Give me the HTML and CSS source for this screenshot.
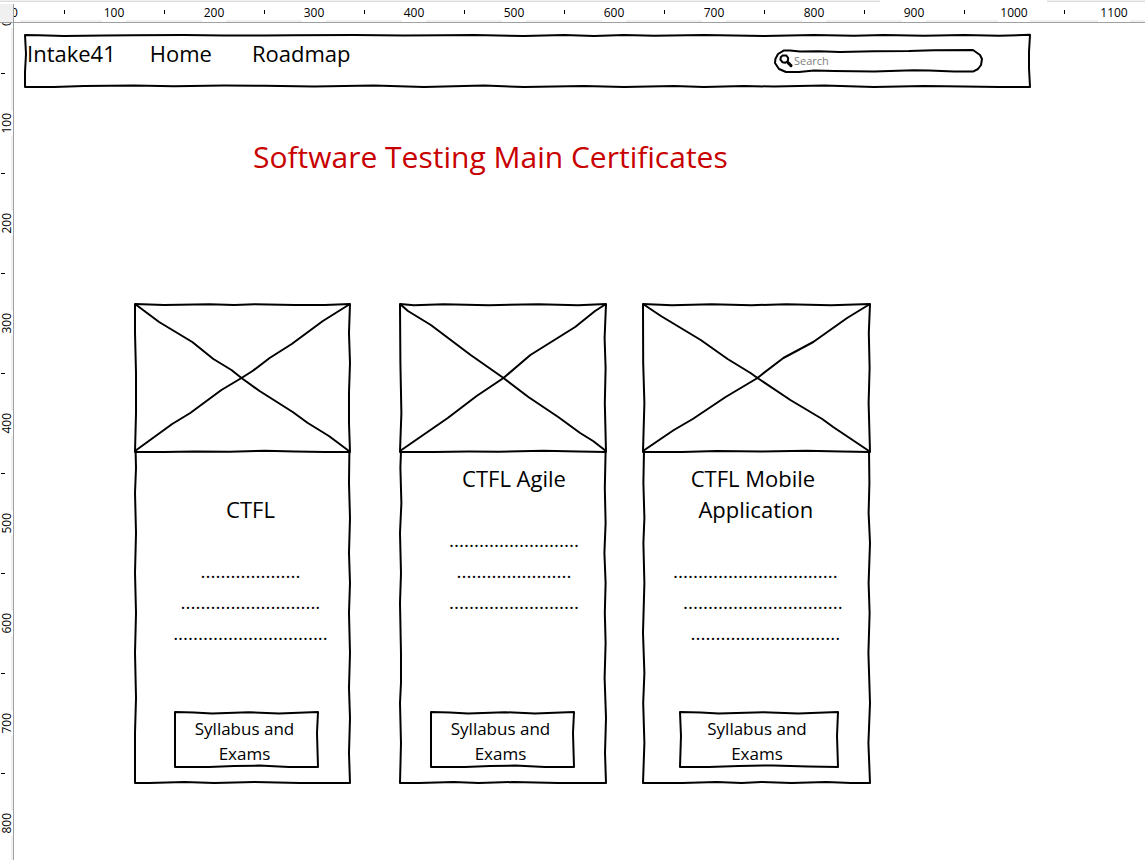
FILE: index.html
```html
<!DOCTYPE html>
<html lang="en">
<head>
<meta charset="utf-8">
<title>Software Testing Main Certificates</title>
<link rel="stylesheet" href="styles.css">
</head>
<body>
<div class="editor">
  <div class="edge"><span class="edge-left"></span><span class="edge-right"></span></div>
  <div class="corner"></div>
  <div class="ruler ruler-top">
    <div class="unit unit-first"><span>0</span></div>
    <div class="unit"><span>100</span></div>
    <div class="unit"><span>200</span></div>
    <div class="unit"><span>300</span></div>
    <div class="unit"><span>400</span></div>
    <div class="unit"><span>500</span></div>
    <div class="unit"><span>600</span></div>
    <div class="unit"><span>700</span></div>
    <div class="unit"><span>800</span></div>
    <div class="unit"><span>900</span></div>
    <div class="unit"><span>1000</span></div>
    <div class="unit"><span>1100</span></div>
  </div>
  <div class="ruler ruler-left">
    <div class="unit unit-first"><span>0</span></div>
    <div class="unit"><span>100</span></div>
    <div class="unit"><span>200</span></div>
    <div class="unit"><span>300</span></div>
    <div class="unit"><span>400</span></div>
    <div class="unit"><span>500</span></div>
    <div class="unit"><span>600</span></div>
    <div class="unit"><span>700</span></div>
    <div class="unit"><span>800</span></div>
  </div>

  <div class="canvas">
    <header class="topbar">
      <svg class="sketch" viewBox="0 0 1007 54" preserveAspectRatio="none" aria-hidden="true">
        <path d="M1 1 L15 1.2 40 2 80 1.5 110 1.2 160 1 200 1.6 240 1.4 270 1.2 330 1 380 1.6 420 1.2 450 1 500 2 540 1 570 2 600 1 630 1.8 680 1 740 2 790 1 830 1.8 860 1 900 1.8 940 1 975 1.8 1006 .8 L1005 18 1005 34 1006 53 L975 53 940 52.5 900 52 850 53 800 51.6 750 52.6 720 52 680 53 650 52 600 53 560 52 500 53 460 51.6 400 53 350 51.6 290 52.6 240 51.8 200 51.6 150 52.2 110 51.6 60 52 30 53 1 53 L1 38 2 20 Z"/>
      </svg>
      <nav class="menu">
        <a href="#intake">Intake41</a>
        <a href="#home">Home</a>
        <a href="#roadmap">Roadmap</a>
      </nav>
      <form class="search">
        <svg class="sketch" viewBox="0 0 209 24" preserveAspectRatio="none" aria-hidden="true">
          <path d="M10 1.4 L16 1.4 26 2.6 45 2.2 66 3 100 2.2 135 2 160 1.2 199 1 L206 6 208 10 207 16 204 20 199 22.6 L180 22.6 155 21.4 140 21.2 100 22.6 60 22 40 21.6 25 23 12 23 L5 20 1 14 1.4 10 4 5 Z"/>
        </svg>
        <svg class="glass" viewBox="0 0 14 14" aria-hidden="true">
          <path d="M3.4 1.6 L7.2 1.4 9.2 4 8.8 7 6.4 8.8 3.4 8.2 1.4 5.6 1.8 3.2 Z"/>
          <path class="handle" d="M9 8.6 L12 11.6"/>
        </svg>
        <input type="search" placeholder="Search" aria-label="Search">
      </form>
    </header>

    <main>
      <h1>Software Testing Main Certificates</h1>
      <div class="cards">
        <article class="card card-ctfl">
          <svg class="sketch" viewBox="0 0 216 481" preserveAspectRatio="none" aria-hidden="true">
            <path d="M1.6 148 L2 165 1 190 2 230 1 270 2 310 1 350 2 395 1 430 1 480 L15 480 50 479 80 480 120 479 165 480 215 480 L214 450 215 415 214 385 215 350 214 310 215 280 214 250 215 215 214 180 214.4 148"/>
          </svg>
          <div class="picture">
            <svg class="sketch" viewBox="0 0 216 150" preserveAspectRatio="none" role="img" aria-label="Picture">
              <path d="M1 1 L30 2 75 1.2 100 2 120 1.2 160 2 190 2 215 1 L214 30 215 60 214 90 214 120 215 149 L190 149 160 148.4 130 147.8 95 148.8 60 148.4 30 149 1 149 L2 110 2 70 1 30 Z"/>
              <path d="M1 1 L25 19 58 39 79 56 97 67 107 75 125 88 158 109 173 120 194 133 214 148 M215 1 L188 18 157 41 135 55 118 68 107 75 87 87 56 110 38 121 1 148"/>
            </svg>
          </div>
          <div class="content">
            <h2>CTFL</h2>
            <p>....................</p>
            <p>............................</p>
            <p>...............................</p>
          </div>
          <button type="button">
            <svg class="sketch" viewBox="0 0 145 57" preserveAspectRatio="none" aria-hidden="true">
              <path d="M1 1 L20 1.4 38 2.4 75 1.2 105 2.4 144 1 L143 22 144 56 L115 56 85 54.6 60 55 35 56 1 56 Z"/>
            </svg>
            Syllabus and Exams
          </button>
        </article>

        <article class="card card-agile">
          <svg class="sketch" viewBox="0 0 209 481" preserveAspectRatio="none" aria-hidden="true">
            <path d="M2 148 L1.4 165 2.4 200 1 230 2 270 1 300 2 350 2 380 1 400 2 440 1 480 L20 480 55 479 80 480 115 479 160 480 208 480 L207 450 208 415 206.6 375 207.6 340 206.8 310 207.6 280 206.4 250 207.6 220 206.8 185 207.6 148"/>
          </svg>
          <div class="picture">
            <svg class="sketch" viewBox="0 0 209 150" preserveAspectRatio="none" role="img" aria-label="Picture">
              <path d="M1 1 L15 2.2 45 1.2 90 2.2 140 1.2 180 2.2 208 1 L206.6 35 207.6 65 206.8 100 208 149 L180 148.4 145 147.8 100 148.8 70 148.6 35 149 1 149 L2.4 110 1.4 60 Z"/>
              <path d="M1 1 L9 8 32 22 72 52 105 75 130 94 160 114 182 130 195 138 208 148 M208 1 L197 8 177 24 132 52 105 75 99 79 78 93 49 115 1 148"/>
            </svg>
          </div>
          <div class="content">
            <h2>CTFL Agile</h2>
            <p>..........................</p>
            <p>.......................</p>
            <p>..........................</p>
          </div>
          <button type="button">
            <svg class="sketch" viewBox="0 0 145 57" preserveAspectRatio="none" aria-hidden="true">
              <path d="M1 1 L20 1.4 38 2.4 75 1.2 105 2.4 144 1 L143 22 144 56 L115 56 85 54.6 60 55 35 56 1 56 Z"/>
            </svg>
            Syllabus and Exams
          </button>
        </article>

        <article class="card card-mobile">
          <svg class="sketch" viewBox="0 0 230 481" preserveAspectRatio="none" aria-hidden="true">
            <path d="M2 148 L1.4 180 2.4 215 1.4 240 2.4 280 1 330 2.4 370 1.2 400 2.4 440 1 480 L40 480 75 479 100 480 120 479 150 480 185 479 210 480 229 480 L227.4 440 229 400 227.4 350 228.6 310 227.6 280 229 240 227.6 210 228.4 180 228 148"/>
          </svg>
          <div class="picture">
            <svg class="sketch" viewBox="0 0 230 150" preserveAspectRatio="none" role="img" aria-label="Picture">
              <path d="M1 1 L30 2.2 70 1.2 110 2.2 145 1.2 190 2.2 229 1 L227.8 30 228.6 65 227.6 100 229 149 L200 148.4 165 147.8 120 148.6 75 148 40 149 1 149 L2.4 100 1.2 60 Z"/>
              <path d="M1 1 L19 13 59 37 86 56 109 70 116 75 149 97 181 116 192 124 228 148 M229 1 L206 15 172 39 142 55 121 71 116 75 84 94 51 116 32 127 1 148"/>
            </svg>
          </div>
          <div class="content">
            <h2>CTFL Mobile<br>&nbsp;Application</h2>
            <p>&nbsp;.................................</p>
            <p>&nbsp;&nbsp;&nbsp;&nbsp;................................</p>
            <p>&nbsp;&nbsp;&nbsp;&nbsp;&nbsp;..............................</p>
          </div>
          <button type="button">
            <svg class="sketch" viewBox="0 0 161 57" preserveAspectRatio="none" aria-hidden="true">
              <path d="M1 1 L22 1.4 40 2.4 85 1.2 120 2.4 160 1 L159 25 160 56 L130 55.4 95 54.4 60 55 30 56 1 56 L2 25 Z"/>
            </svg>
            Syllabus and Exams
          </button>
        </article>
      </div>
    </main>
  </div>
</div>
</body>
</html>
```
FILE: styles.css
```css
* { box-sizing: border-box; }

body {
  margin: 0;
  background: #fff;
  color: #000;
  font-family: "Open Sans", "Noto Sans", sans-serif;
}

.editor {
  display: grid;
  grid-template-columns: 14px 1fr;
  grid-template-rows: 4px 19px 1fr;
  height: 100vh;
  overflow: hidden;
}

/* Bottom edge of the toolbar above the rulers */
.edge {
  grid-column: 1 / 3;
  display: flex;
  justify-content: space-between;
  height: 2px;
}
.edge span {
  background: #f0f0f0;
  border-bottom: 1px solid #dcdcdc;
}
.edge-left { width: 880px; }
.edge-right { width: 98px; }

.corner {
  background: #f0f0f0;
  border-right: 1px solid #a0a0a0;
  border-bottom: 1px solid #a0a0a0;
}

/* Rulers: one unit is 100px, with its label in the middle and a tick at its start */
.ruler {
  display: flex;
  min-width: 0;
  min-height: 0;
  font-size: 12px;
  line-height: 18px;
}
.unit {
  display: flex;
  flex: none;
  justify-content: center;
}
.unit-first { overflow: hidden; }
.ruler span { background: #fff; }

.ruler-top {
  border-bottom: 1px solid #a0a0a0;
  background: linear-gradient(#fff 16px, #f0f0f0 16px);
}
.ruler-top .unit {
  width: 100px;
  background: linear-gradient(#000, #000) 0 6px / 1px 4px no-repeat;
}
.ruler-top .unit-first {
  width: 50px;
  justify-content: flex-start;
  background: none;
}
.ruler-top span { padding: 0 2px; }
.ruler-top .unit-first span { margin-left: -5px; }

.ruler-left {
  flex-direction: column;
  border-right: 1px solid #a0a0a0;
  background: linear-gradient(to right, #fff 11px, #f0f0f0 11px);
}
.ruler-left .unit {
  height: 100px;
  align-items: center;
  background: linear-gradient(#000, #000) 1px 0 / 4px 1px no-repeat;
}
.ruler-left .unit-first {
  height: 50px;
  align-items: flex-start;
  background: none;
}
.ruler-left span {
  padding: 2px 0;
  line-height: 13px;
  writing-mode: vertical-rl;
  transform: rotate(180deg);
}
.ruler-left .unit-first span { margin-top: -6px; }

.canvas { min-width: 0; padding: 11px 114px 0 10px; }

/* Hand-drawn outlines fill the box they belong to */
.sketch {
  position: absolute;
  inset: 0;
  width: 100%;
  height: 100%;
  overflow: visible;
  fill: none;
  stroke: #000;
  stroke-width: 2;
  stroke-linejoin: round;
  pointer-events: none;
}
.sketch path { vector-effect: non-scaling-stroke; }

.topbar {
  position: relative;
  display: flex;
  justify-content: space-between;
  align-items: flex-start;
  min-height: 54px;
  padding: 4px 48px 0 3px;
}
.menu {
  display: flex;
  gap: 36px;
  font-size: 22px;
  line-height: 31px;
}
.menu a { color: #000; text-decoration: none; }
.menu a:last-child { margin-left: 4px; }
.menu a:first-child { margin-right: -2px; }

.search {
  position: relative;
  display: flex;
  align-items: center;
  gap: 1px;
  width: 209px;
  height: 24px;
  margin-top: 11px;
  padding-left: 5px;
}
.glass {
  width: 14px;
  height: 14px;
  fill: none;
  stroke: #000;
  stroke-width: 2;
  stroke-linejoin: round;
}
.glass .handle { stroke-width: 3; stroke-linecap: round; }
.search input {
  flex: 1;
  min-width: 0;
  margin-right: 12px;
  padding: 0;
  border: 0;
  outline: 0;
  background: none;
  font: 11px/16px "Open Sans", "Noto Sans", sans-serif;
}
.search input::placeholder { color: #808080; opacity: 1; }

h1 {
  margin: 47px 0 0 229px;
  color: #c80000;
  font-size: 30px;
  font-weight: 400;
  line-height: 44px;
  white-space: nowrap;
}

.cards {
  display: grid;
  grid-template-columns: 230fr 208fr 229fr;
  gap: 35px;
  margin: 124px 160px 0 110px;
}
.card {
  position: relative;
  display: flex;
  flex-direction: column;
  min-height: 481px;
  padding-bottom: 16px;
}
.card-ctfl { margin-right: 13px; }
.picture { position: relative; height: 150px; }

.content {
  flex: 1;
  padding-top: 10px;
  text-align: center;
  white-space: nowrap;
}
.card-ctfl .content { padding-top: 41px; padding-left: 16px; }
.card-agile .content { padding-left: 22px; }
.card-mobile .content { padding-right: 7px; }

h2 {
  margin: 0 0 31px;
  font-size: 22px;
  font-weight: 400;
  line-height: 31px;
}
p { margin: 0; font-size: 19px; line-height: 31px; }

button {
  position: relative;
  min-height: 57px;
  margin: 0 32px 0 40px;
  padding: 2px 16px 0 12px;
  border: 0;
  background: none;
  color: #000;
  font: 17px/25px "Open Sans", "Noto Sans", sans-serif;
}
.card-agile button { margin-left: 31px; }
.card-mobile button { margin-left: 37px; padding: 2px 24px 0 20px; }
```
